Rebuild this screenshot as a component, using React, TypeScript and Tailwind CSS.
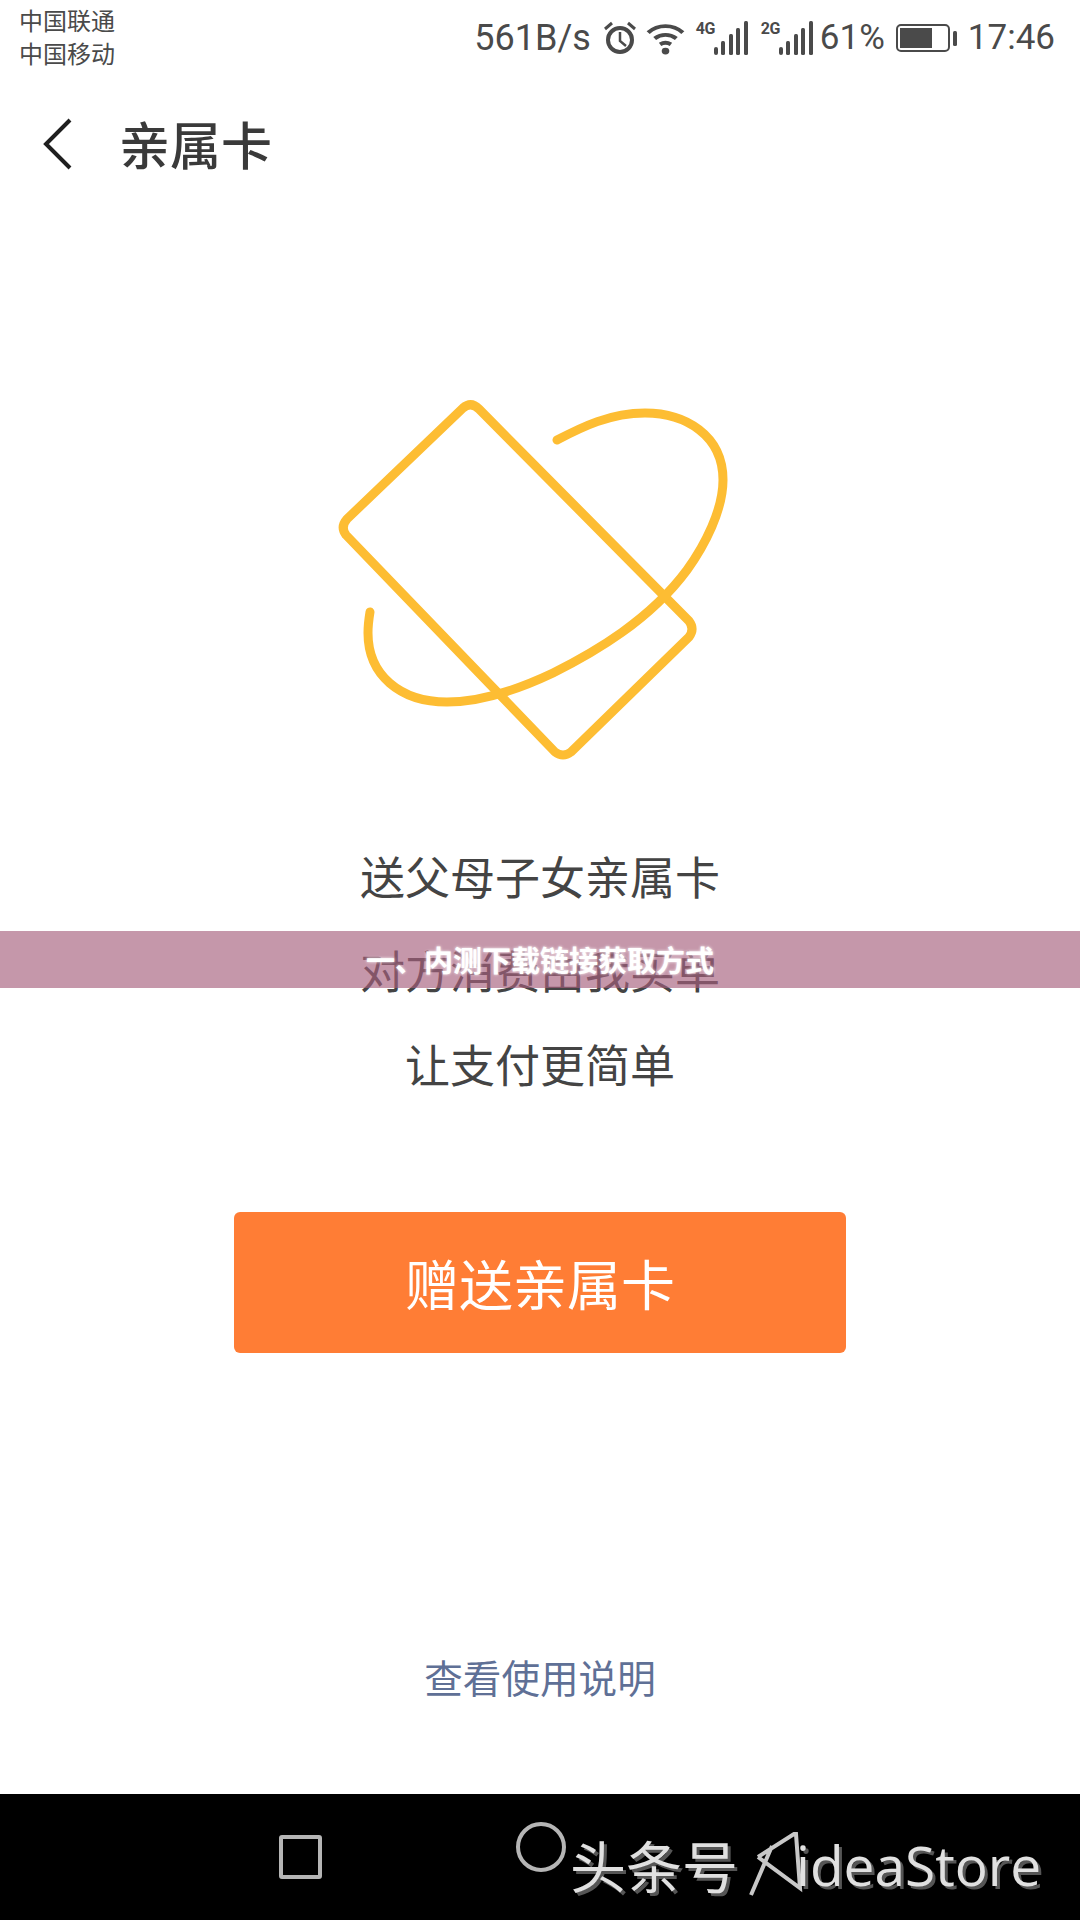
const CJK = "font-['Noto_Sans_CJK_SC','Noto_Sans',sans-serif]";

function SignalBars({ label }: { label: string }) {
  return (
    <div className="relative h-[34px] w-[52px]">
      <span className="absolute left-0 top-0 text-[16px] font-bold leading-[16px] tracking-[-0.5px] text-[#4a4a4a] font-['Roboto',sans-serif]">
        {label}
      </span>
      <svg viewBox="0 0 52 34" className="absolute inset-0 h-[34px] w-[52px]" fill="#4a4a4a">
        <rect x="18" y="26" width="4" height="8" rx="2" />
        <rect x="25" y="20" width="4" height="14" rx="1.5" />
        <rect x="33" y="13" width="4" height="21" rx="1.5" />
        <rect x="40" y="7" width="4" height="27" rx="1.5" />
        <rect x="48" y="0" width="4" height="34" rx="1.5" />
      </svg>
    </div>
  );
}

function StatusBar() {
  return (
    <div className="flex h-[106px] items-start justify-between pl-[19px] pr-[25px]">
      <div className={`pt-[3px] text-[24px] leading-[33px] text-[#4a4a4a] ${CJK}`}>
        <div>中国联通</div>
        <div>中国移动</div>
      </div>
      <div className="flex items-center pt-[18px] text-[#4a4a4a] font-['Roboto',sans-serif]">
        <span className="text-[36px] leading-[40px]">561B/s</span>
        <svg viewBox="0 0 34 36" className="ml-[12px] h-[36px] w-[34px]" fill="none" stroke="#4a4a4a" strokeWidth="3.5">
          <circle cx="17" cy="20" r="12" strokeWidth="4" />
          <path d="M17 12v9l6 5" strokeWidth="2.5" />
          <path d="M2 9l7-6M32 9l-7-6" strokeWidth="3" />
        </svg>
        <svg viewBox="0 0 36 34" preserveAspectRatio="none" className="ml-[9px] h-[33px] w-[39px]" fill="none" stroke="#4a4a4a" strokeWidth="4">
          <path d="M2 11c9-9 23-9 32 0" />
          <path d="M8 17c6-5 14-5 20 0" />
          <path d="M13 23c3-2 7-2 10 0" />
          <circle cx="18" cy="30" r="3.5" fill="#4a4a4a" stroke="none" />
        </svg>
        <div className="ml-[11px]">
          <SignalBars label="4G" />
        </div>
        <div className="ml-[13px]">
          <SignalBars label="2G" />
        </div>
        <span className="ml-[7px] text-[35px] leading-[40px]">61%</span>
        <svg viewBox="0 0 61 28" className="ml-[11px] h-[28px] w-[61px]" fill="none">
          <rect x="1" y="1" width="52" height="26" rx="4" stroke="#4a4a4a" strokeWidth="2" />
          <rect x="4" y="4" width="32" height="20" fill="#4a4a4a" />
          <rect x="57" y="7" width="4" height="15" rx="1.5" fill="#4a4a4a" />
        </svg>
        <span className="ml-[11px] text-[35px] leading-[40px]">17:46</span>
      </div>
    </div>
  );
}

function CardIllustration() {
  return (
    <svg viewBox="0 0 420 390" className="h-[390px] w-[420px]" fill="none" stroke="#fdbd33" strokeWidth="9" strokeLinecap="round" strokeLinejoin="round">
      <path d="M143 28 Q151 21 159 29 L369 241 Q375 249 369 257 L251 372 Q243 378 235 372 L26 155 Q20 147 27 139 Z" />
      <path d="M237 60 C262 47 290 33 325 33 C365 33 403 55 403 100 C403 130 385 165 367 190 C330 240 275 272 233 293 C195 311 160 322 127 322 C80 322 48 295 48 253 C48 245 49 238 50 232" />
    </svg>
  );
}

export default function App() {
  return (
    <div className={`relative flex h-[1920px] w-[1080px] flex-col overflow-hidden bg-white ${CJK}`}>
      <StatusBar />
      <header className="flex h-[75px] items-center">
        <svg viewBox="0 0 34 54" className="ml-[41px] h-[54px] w-[34px]" fill="none" stroke="#1f1f1f" strokeWidth="4">
          <path d="M29 3 5 27l24 24" />
        </svg>
        <h1 className="ml-[44px] text-[51px] font-medium leading-none text-[#3a3a3a]">亲属卡</h1>
      </header>

      <main className="flex flex-1 flex-col items-center">
        <div className="ml-[-20px] mt-[199px]">
          <CardIllustration />
        </div>
        <div className="mt-[59px] flex flex-col items-center text-[45px] leading-[94px] text-[#444444]">
          <p>送父母子女亲属卡</p>
          <p>对方消费由我买单</p>
          <p>让支付更简单</p>
        </div>
        <button className="mt-[101px] flex h-[141px] w-[612px] items-center justify-center rounded-[6px] bg-[#ff7d35] text-[54px] text-white">
          赠送亲属卡
        </button>
        <a className="mt-[295px] text-[38.6px] text-[#5f7096]">查看使用说明</a>
      </main>

      <footer className="relative flex h-[126px] shrink-0 items-center bg-black">
        <div className="ml-[279px] h-[44px] w-[43px] rounded-[3px] border-[4px] border-[#b5b5b5]" />
        <div className="ml-[194px] mt-[-20px] h-[50px] w-[50px] rounded-full border-[4px] border-[#b5b5b5]" />
        <span className="ml-[4px] mt-[14px] text-[56px] leading-none text-[#e0e0e0] [text-shadow:3px_3px_0_#555]">头条号</span>
        <svg viewBox="0 0 56 70" className="ml-[9px] mt-[16px] h-[70px] w-[56px]" fill="none" stroke="#c8c8c8" strokeWidth="4">
          <path d="M4 65 25 16M11 27 47 4l2 0 4 54L11 27" />
        </svg>
        <span className="ml-[-7px] mt-[15px] text-[55px] leading-none text-[#e0e0e0] font-['Open_Sans',sans-serif] [text-shadow:3px_3px_0_#555]">ideaStore</span>
      </footer>

      <div className="absolute left-0 top-[931px] flex h-[57px] w-full items-center justify-center bg-[#a65f7d]/65 text-[29px] font-bold text-white [text-shadow:0_0_3px_#fff]">
        一、内测下载链接获取方式
      </div>
    </div>
  );
}
